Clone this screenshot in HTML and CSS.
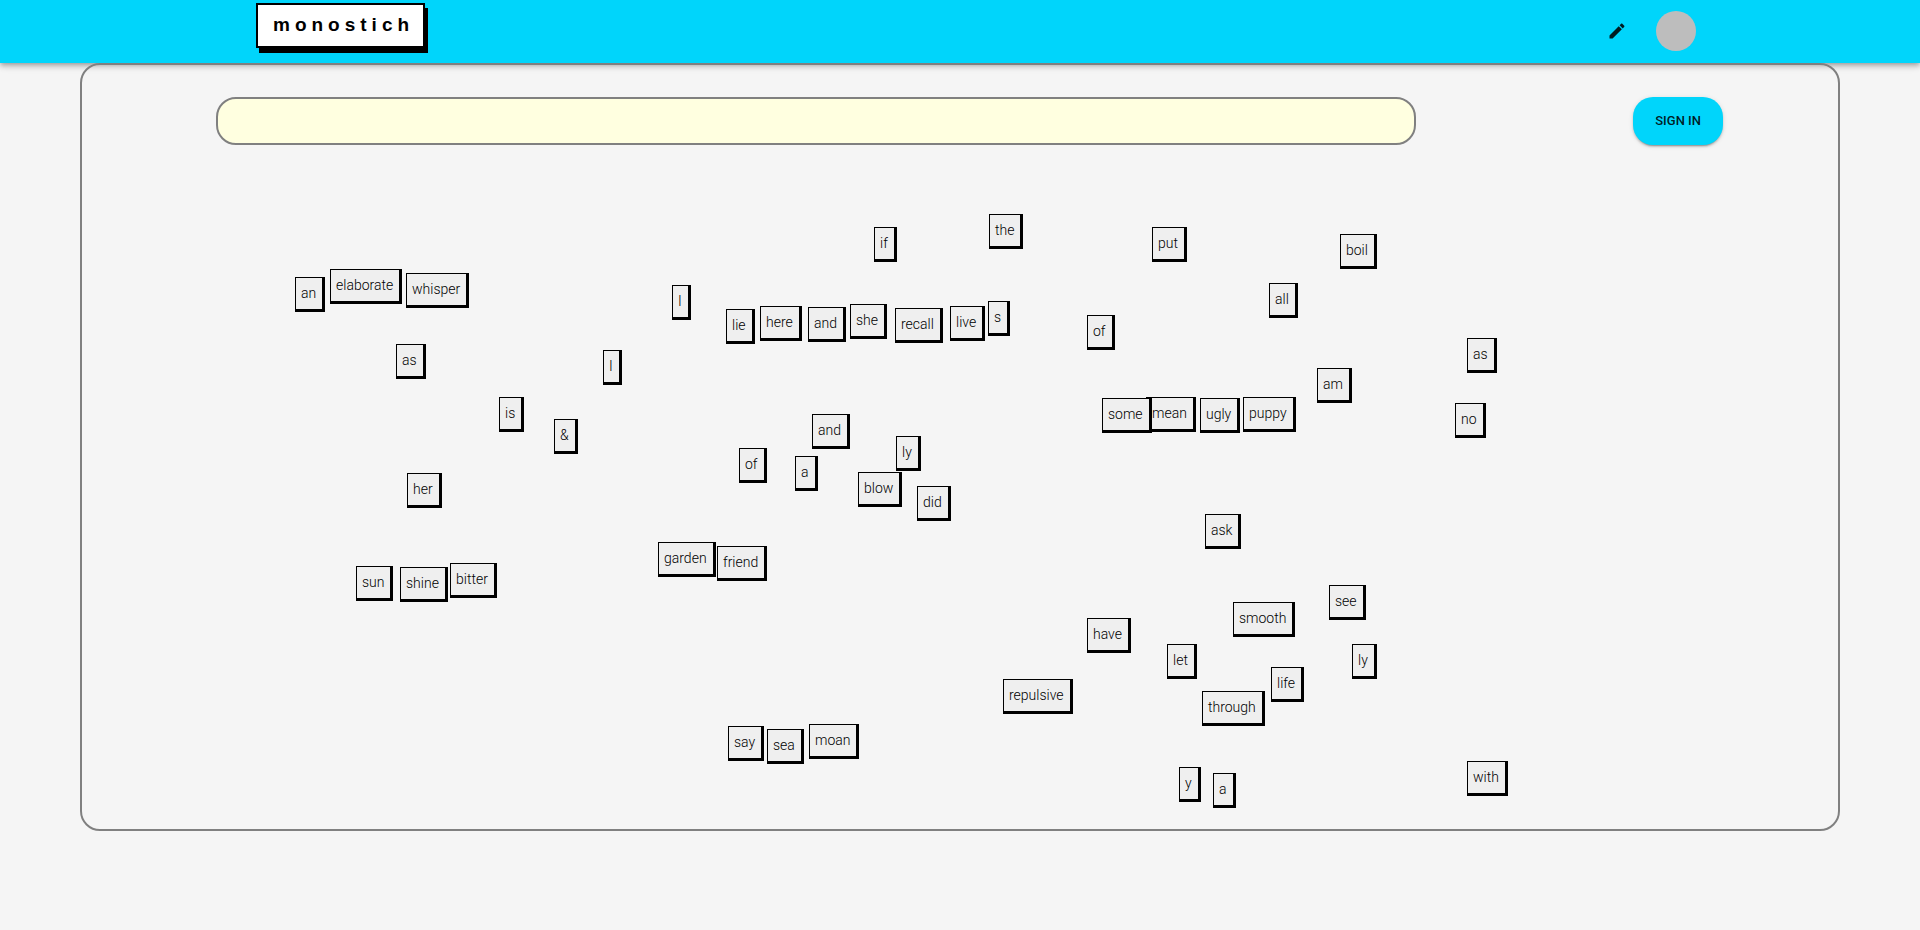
FILE: index.html
```html
<!DOCTYPE html>
<html lang="en">
<head>
<meta charset="utf-8">
<title>monostich</title>
<link rel="stylesheet" href="styles.css">
</head>
<body>
<header class="app-bar">
  <a class="logo" href="#">monostich</a>
  <nav class="app-nav">
    <button class="icon-button" type="button" aria-label="Write">
      <svg class="icon" viewBox="0 0 24 24" aria-hidden="true"><path d="M3 17.250V21h3.750L17.810 9.940l-3.750-3.750L3 17.250zM20.710 7.040c.39-.39.39-1.020 0-1.410l-2.340-2.340c-.39-.39-1.020-.39-1.410 0l-1.830 1.830 3.750 3.750 1.830-1.830z"/></svg>
    </button>
    <button class="avatar" type="button" aria-label="Account"></button>
  </nav>
</header>
<main class="panel">
  <form class="compose">
    <input class="line-input" type="text" aria-label="Your line" readonly>
    <button class="sign-in" type="button">SIGN IN</button>
  </form>
  <section class="board" aria-label="Word tiles">
    <button type="button" class="tile" style="left:213px;top:132px">an</button>
    <button type="button" class="tile" style="left:248px;top:124px">elaborate</button>
    <button type="button" class="tile" style="left:324px;top:128px">whisper</button>
    <button type="button" class="tile" style="left:314px;top:199px">as</button>
    <button type="button" class="tile" style="left:521px;top:205px">I</button>
    <button type="button" class="tile" style="left:417px;top:252px">is</button>
    <button type="button" class="tile" style="left:472px;top:274px">&amp;</button>
    <button type="button" class="tile" style="left:792px;top:82px">if</button>
    <button type="button" class="tile" style="left:907px;top:69px">the</button>
    <button type="button" class="tile" style="left:590px;top:140px">I</button>
    <button type="button" class="tile" style="left:644px;top:164px">lie</button>
    <button type="button" class="tile" style="left:678px;top:161px">here</button>
    <button type="button" class="tile" style="left:726px;top:162px">and</button>
    <button type="button" class="tile" style="left:768px;top:159px">she</button>
    <button type="button" class="tile" style="left:813px;top:163px">recall</button>
    <button type="button" class="tile" style="left:868px;top:161px">live</button>
    <button type="button" class="tile" style="left:906px;top:156px">s</button>
    <button type="button" class="tile" style="left:1070px;top:82px">put</button>
    <button type="button" class="tile" style="left:1258px;top:89px">boil</button>
    <button type="button" class="tile" style="left:1187px;top:138px">all</button>
    <button type="button" class="tile" style="left:1005px;top:170px">of</button>
    <button type="button" class="tile" style="left:1385px;top:193px">as</button>
    <button type="button" class="tile" style="left:1235px;top:223px">am</button>
    <button type="button" class="tile" style="left:1373px;top:258px">no</button>
    <button type="button" class="tile" style="left:1064px;top:252px">mean</button>
    <button type="button" class="tile" style="left:1020px;top:253px">some</button>
    <button type="button" class="tile" style="left:1118px;top:253px">ugly</button>
    <button type="button" class="tile" style="left:1161px;top:252px">puppy</button>
    <button type="button" class="tile" style="left:657px;top:303px">of</button>
    <button type="button" class="tile" style="left:730px;top:269px">and</button>
    <button type="button" class="tile" style="left:713px;top:311px">a</button>
    <button type="button" class="tile" style="left:814px;top:291px">ly</button>
    <button type="button" class="tile" style="left:776px;top:327px">blow</button>
    <button type="button" class="tile" style="left:835px;top:341px">did</button>
    <button type="button" class="tile" style="left:576px;top:397px">garden</button>
    <button type="button" class="tile" style="left:635px;top:401px">friend</button>
    <button type="button" class="tile" style="left:325px;top:328px">her</button>
    <button type="button" class="tile" style="left:274px;top:421px">sun</button>
    <button type="button" class="tile" style="left:318px;top:422px">shine</button>
    <button type="button" class="tile" style="left:368px;top:418px">bitter</button>
    <button type="button" class="tile" style="left:921px;top:534px">repulsive</button>
    <button type="button" class="tile" style="left:646px;top:581px">say</button>
    <button type="button" class="tile" style="left:685px;top:584px">sea</button>
    <button type="button" class="tile" style="left:727px;top:579px">moan</button>
    <button type="button" class="tile" style="left:1123px;top:369px">ask</button>
    <button type="button" class="tile" style="left:1247px;top:440px">see</button>
    <button type="button" class="tile" style="left:1151px;top:457px">smooth</button>
    <button type="button" class="tile" style="left:1005px;top:473px">have</button>
    <button type="button" class="tile" style="left:1085px;top:499px">let</button>
    <button type="button" class="tile" style="left:1270px;top:499px">ly</button>
    <button type="button" class="tile" style="left:1189px;top:522px">life</button>
    <button type="button" class="tile" style="left:1120px;top:546px">through</button>
    <button type="button" class="tile" style="left:1097px;top:622px">y</button>
    <button type="button" class="tile" style="left:1131px;top:628px">a</button>
    <button type="button" class="tile" style="left:1385px;top:616px">with</button>
  </section>
</main>
</body>
</html>
```

FILE: styles.css
```css
* {
  box-sizing: border-box;
}

body {
  margin: 0;
  background: #f5f5f5;
  color: rgba(0, 0, 0, 0.87);
  font-family: Roboto, "Liberation Sans", sans-serif;
  font-size: 14px;
}

button {
  font-family: inherit;
  color: inherit;
  cursor: pointer;
}

.app-bar {
  display: flex;
  justify-content: space-between;
  align-items: flex-start;
  padding: 3px 224px 12px 256px;
  background: #00d5fb;
  box-shadow: 0 2px 4px -1px rgba(0, 0, 0, 0.2), 0 4px 5px 0 rgba(0, 0, 0, 0.14), 0 1px 10px 0 rgba(0, 0, 0, 0.12);
}

.logo {
  padding: 9px 9px 11px 15px;
  border: 2px solid #000;
  background: #fff;
  box-shadow: 3px 5px 0 #000;
  color: #000;
  font-family: "Liberation Sans", Arial, sans-serif;
  font-size: 19px;
  font-weight: 700;
  line-height: 21px;
  letter-spacing: 5px;
  text-decoration: none;
}

.app-nav {
  display: flex;
  align-items: center;
  gap: 17px;
  padding-top: 8px;
}

.icon-button {
  display: flex;
  padding: 12px;
  border: 0;
  background: none;
}

.icon {
  width: 20px;
  height: 20px;
  margin: -2px 0;
  fill: currentColor;
}

.avatar {
  width: 40px;
  height: 40px;
  padding: 0;
  border: 0;
  border-radius: 50%;
  background: #bdbdbd;
}

.panel {
  margin: 0 80px;
  border: 2px solid #808080;
  border-radius: 20px;
}

.compose {
  display: flex;
  justify-content: space-between;
  padding: 32px 115px 0 134px;
}

.line-input {
  width: 80%;
  max-width: 1200px;
  height: 48px;
  padding: 0 16px;
  border: 2px solid #808080;
  border-radius: 20px;
  background: #ffffe0;
  outline: 0;
  font: inherit;
}

.sign-in {
  padding: 0 22px 1px;
  border: 0;
  border-radius: 20px;
  background: #00d5fb;
  box-shadow: 0 3px 1px -2px rgba(0, 0, 0, 0.2), 0 2px 2px 0 rgba(0, 0, 0, 0.14), 0 1px 5px 0 rgba(0, 0, 0, 0.12);
  font-size: 13px;
  font-weight: 500;
}

.board {
  position: relative;
  min-height: 684px;
}

.tile {
  position: absolute;
  padding: 5px 6px 6px 5px;
  border: solid #000;
  border-width: 1px 3px 3px 1px;
  background: #efefef;
  font-size: 14px;
  font-weight: 300;
  line-height: 20px;
  color: #000;
  white-space: nowrap;
}
```
